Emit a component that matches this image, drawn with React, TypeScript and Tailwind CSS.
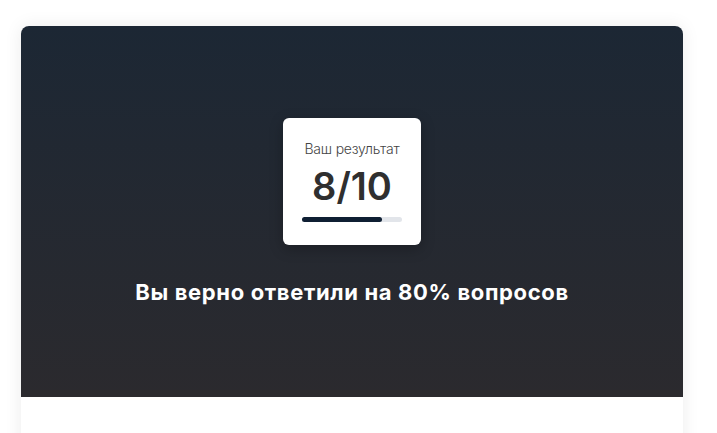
export default function App() {
  const score = 8;
  const total = 10;
  const pct = Math.round((score / total) * 100);

  return (
    <div className="min-h-screen bg-white pl-[21px] pr-[34px] pt-[26px] font-['Inter',sans-serif]">
      <div className="overflow-hidden rounded-lg bg-white shadow-[0_0_18px_rgba(0,0,0,0.08)]">
        {/* Result header */}
        <div className="flex h-[371px] flex-col items-center justify-center bg-gradient-to-b from-[#1c2734] to-[#2b2a2e] pt-[1px]">
          <div className="flex w-[138px] flex-col items-center rounded-md bg-white px-[19px] pb-[23px] pt-[23px] shadow-[0_4px_14px_rgba(0,0,0,0.25)]">
            <p className="text-[14px] font-light leading-4 tracking-[-0.2px] text-[#444]">Ваш результат</p>
            <p className="mt-[8px] text-[38px] font-semibold leading-[42px] text-[#2f2f2f]">
              {score}/{total}
            </p>
            <div className="mt-[10px] h-[5px] w-full rounded-full bg-[#e2e5ea]">
              <div className="h-full rounded-full bg-[#0f1f33]" style={{ width: `${pct}%` }} />
            </div>
          </div>
          <h2 className="mt-[33px] text-[22px] font-bold leading-7 tracking-[0.65px] text-white">
            Вы верно ответили на {pct}% вопросов
          </h2>
        </div>
        <div className="h-[60px]" />
      </div>
    </div>
  );
}
